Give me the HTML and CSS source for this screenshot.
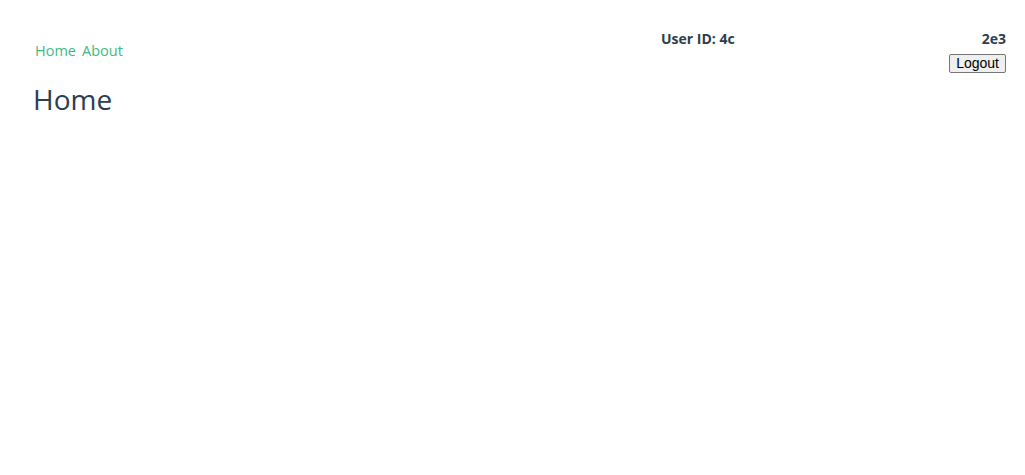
FILE: index.html
```html
<!DOCTYPE html>
<html>
<head>
<meta charset="utf-8">
<link rel="stylesheet" href="styles.css">
</head>
<body>
<div class="app">
  <header class="header">
    <nav class="nav">
      <a href="#" class="link">Home</a>
      <a href="#" class="link">About</a>
    </nav>
    <div class="user">
      <div class="user-id"><span>User ID: 4c</span><span>2e3</span></div>
      <button class="logout">Logout</button>
    </div>
  </header>
  <h1 class="title">Home</h1>
</div>
</body>
</html>
```
FILE: styles.css
```css
html, body { margin: 0; padding: 0; background: #fff; }
body { font-family: "Open Sans", "Noto Sans", sans-serif; color: #2c3e50; }
.app { padding: 0 19px 0 33px; }
.header { display: flex; justify-content: space-between; align-items: flex-start; padding-top: 30px; }
.nav { display: flex; gap: 6px; padding-top: 11px; padding-left: 2px; }
.link { color: #42b983; text-decoration: none; font-size: 14.5px; }
.user { display: flex; flex-direction: column; align-items: flex-end; }
.user-id { width: 345px; display: flex; justify-content: space-between; font-weight: bold; font-size: 14px; line-height: 18px; }
.logout { margin-top: 6px; font-family: "Liberation Sans", Arial, sans-serif; font-size: 14px; line-height: 15px; padding: 1px 6px; border: 1px solid #767676; border-radius: 2px; background: #efefef; color: #000; }
.title { margin: 7px 0 0; font-weight: normal; font-size: 28px; }
```
